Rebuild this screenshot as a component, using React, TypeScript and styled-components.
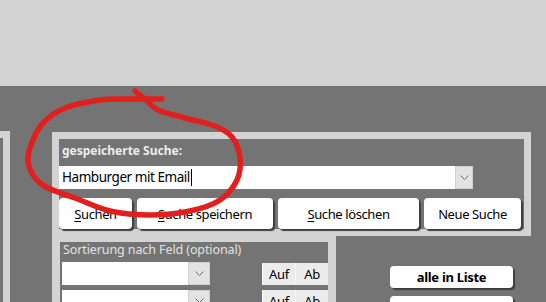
import React from "react";
import styled, { createGlobalStyle } from "styled-components";

const GlobalStyle = createGlobalStyle`
  html, body { margin: 0; padding: 0; }
  body {
    background: #747474;
    font-family: "Noto Sans", "Open Sans", sans-serif;
    overflow: hidden;
  }
  #root { width: 546px; height: 302px; position: relative; overflow: hidden; }
`;

const Page = styled.div`
  width: 546px;
  height: 302px;
  display: flex;
  flex-direction: column;
  background: #747474;
`;

const TopBand = styled.div`
  height: 86px;
  background: #d3d3d3;
  flex-shrink: 0;
`;

const Workspace = styled.div`
  display: flex;
  align-items: flex-start;
  padding-top: 45px;
`;

const LeftPanel = styled.div`
  width: 3px;
  height: 200px;
  border-top: 7px solid #d3d3d3;
  border-right: 7px solid #d3d3d3;
`;

const MainCol = styled.div`
  margin-left: 42px;
  margin-top: 1px;
  display: flex;
  flex-direction: column;
`;

const SearchPanel = styled.div`
  box-sizing: border-box;
  width: 479px;
  height: 104px;
  border: 7px solid #d3d3d3;
  display: flex;
  flex-direction: column;
`;

const PanelTitle = styled.div`
  margin-top: 4px;
  padding-left: 3px;
  height: 16px;
  line-height: 16px;
  font-size: 12px;
  font-weight: 700;
  color: #ececec;
`;

const InputRow = styled.div`
  display: flex;
  margin-top: 7px;
  height: 23px;
`;

const TextInput = styled.div<{ $w: number }>`
  box-sizing: border-box;
  width: ${(p) => p.$w}px;
  height: 100%;
  background: #ffffff;
  color: #000;
  font-size: 13.5px;
  letter-spacing: -0.45px;
  line-height: 23px;
  padding-left: 3px;
  display: flex;
  align-items: center;
`;

const Caret = styled.span`
  display: inline-block;
  width: 1px;
  height: 17px;
  background: #000;
  margin-left: 1px;
`;

const DropButton = styled.div<{ $w: number }>`
  box-sizing: border-box;
  width: ${(p) => p.$w}px;
  height: 100%;
  background: #e3e3e3;
  border: 1px solid #cfcfcf;
  display: flex;
  align-items: center;
  justify-content: center;
`;

const ButtonRow = styled.div`
  display: flex;
  gap: 5px;
  margin-top: 9px;
  height: 31px;
`;

const PanelButton = styled.div<{ $w: number }>`
  box-sizing: border-box;
  width: ${(p) => p.$w}px;
  height: 100%;
  background: #ffffff;
  border-radius: 4px;
  box-shadow: 2px 2px 1px #3e3e3e;
  display: flex;
  align-items: center;
  justify-content: center;
  font-size: 13px;
  letter-spacing: -0.4px;
  color: #000;
`;

const Key = styled.span`
  text-decoration: underline;
  text-underline-offset: 2px;
`;

const LowerRow = styled.div`
  display: flex;
  align-items: flex-start;
`;

const SortPanel = styled.div`
  box-sizing: border-box;
  width: 284px;
  height: 80px;
  border: 8px solid #d3d3d3;
  border-top-width: 6px;
  border-bottom: none;
  display: flex;
  flex-direction: column;
`;

const SortLabel = styled.div`
  height: 21px;
  line-height: 16px;
  padding-left: 3px;
  font-size: 12.5px;
  letter-spacing: -0.1px;
  color: #e2e2e2;
`;

const SortRow = styled.div`
  display: flex;
  align-items: center;
  height: 24px;
  margin-top: 1px;
  margin-bottom: 4px;
  padding-left: 2px;
`;

const Spacer = styled.div`
  flex: 1;
`;

const SmallButton = styled.div`
  box-sizing: border-box;
  width: 33px;
  height: 22px;
  background: #ececec;
  border-left: 1px solid #f8f8f8;
  display: flex;
  align-items: center;
  justify-content: center;
  font-size: 13px;
  letter-spacing: -0.3px;
  color: #000;
`;

const SideCol = styled.div`
  margin-left: 54px;
  margin-top: 30px;
  display: flex;
  flex-direction: column;
  gap: 8px;
`;

const SideButton = styled.div`
  box-sizing: border-box;
  width: 123px;
  height: 22px;
  background: #ffffff;
  border-radius: 4px;
  box-shadow: 2px 2px 1px #3e3e3e;
  display: flex;
  align-items: center;
  justify-content: center;
  font-size: 13px;
  font-weight: 700;
  letter-spacing: -0.3px;
  color: #000;
`;

const Annotation = styled.svg`
  position: absolute;
  left: 0;
  top: 0;
  pointer-events: none;
`;

const Chevron = () => (
  <svg width="9" height="5" viewBox="0 0 9 5">
    <path d="M0.5 0.5 L4.5 4.5 L8.5 0.5" fill="none" stroke="#6a6a6a" strokeWidth="1" />
  </svg>
);

const pts: [number, number][] = [
  [135, 91], [146, 100], [158, 110], [185, 118], [215, 126], [232, 137],
  [240, 158], [237, 180], [220, 200], [190, 211], [150, 215], [110, 211],
  [75, 198], [46, 187], [33, 175], [28, 160], [32, 142], [43, 123],
  [65, 108], [100, 100], [130, 99], [162, 99],
];

function smoothPath(p: [number, number][]) {
  let d = `M${p[0][0]},${p[0][1]}`;
  for (let i = 0; i < p.length - 1; i++) {
    const p0 = p[i - 1] || p[i];
    const p1 = p[i];
    const p2 = p[i + 1];
    const p3 = p[i + 2] || p2;
    const c1x = p1[0] + (p2[0] - p0[0]) / 6;
    const c1y = p1[1] + (p2[1] - p0[1]) / 6;
    const c2x = p2[0] - (p3[0] - p1[0]) / 6;
    const c2y = p2[1] - (p3[1] - p1[1]) / 6;
    d += ` C${c1x.toFixed(1)},${c1y.toFixed(1)} ${c2x.toFixed(1)},${c2y.toFixed(1)} ${p2[0]},${p2[1]}`;
  }
  return d;
}

export default function App() {
  return (
    <>
      <GlobalStyle />
      <Page>
        <TopBand />
        <Workspace>
          <LeftPanel />
          <MainCol>
            <SearchPanel>
              <PanelTitle>gespeicherte Suche:</PanelTitle>
              <InputRow>
                <TextInput $w={396}>
                  Hamburger mit Email<Caret />
                </TextInput>
                <DropButton $w={18}>
                  <Chevron />
                </DropButton>
              </InputRow>
              <ButtonRow>
                <PanelButton $w={73}>
                  <span><Key>S</Key>uchen</span>
                </PanelButton>
                <PanelButton $w={136}>
                  <span><Key>S</Key>uche speichern</span>
                </PanelButton>
                <PanelButton $w={141}>
                  <span><Key>S</Key>uche löschen</span>
                </PanelButton>
                <PanelButton $w={97}>Neue Suche</PanelButton>
              </ButtonRow>
            </SearchPanel>
            <LowerRow>
              <SortPanel>
                <SortLabel>Sortierung nach Feld (optional)</SortLabel>
                <SortRow>
                  <TextInput $w={126} />
                  <DropButton $w={22}>
                    <Chevron />
                  </DropButton>
                  <Spacer />
                  <SmallButton>Auf</SmallButton>
                  <SmallButton>Ab</SmallButton>
                </SortRow>
                <SortRow>
                  <TextInput $w={126} />
                  <DropButton $w={22}>
                    <Chevron />
                  </DropButton>
                  <Spacer />
                  <SmallButton>Auf</SmallButton>
                  <SmallButton>Ab</SmallButton>
                </SortRow>
              </SortPanel>
              <SideCol>
                <SideButton>alle in Liste</SideButton>
                <SideButton />
              </SideCol>
            </LowerRow>
          </MainCol>
        </Workspace>
      </Page>
      <Annotation width="546" height="302" viewBox="0 0 546 302">
        <path
          d={smoothPath(pts)}
          fill="none"
          stroke="#e21f1f"
          strokeWidth="5.5"
          strokeLinecap="round"
          strokeLinejoin="round"
        />
      </Annotation>
    </>
  );
}
